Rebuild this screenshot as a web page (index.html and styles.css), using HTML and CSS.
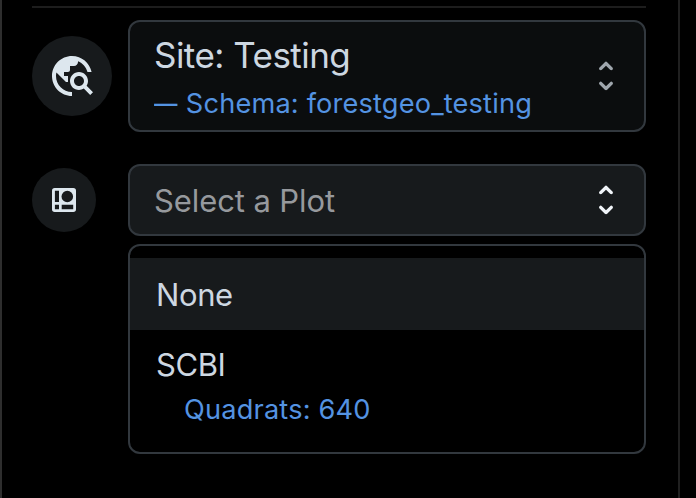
FILE: index.html
```html
<!DOCTYPE html>
<html lang="en">
<head>
<meta charset="utf-8">
<title>Site selection</title>
<link rel="stylesheet" href="styles.css">
</head>
<body>
<aside class="sidebar">
  <hr class="divider">
  <div class="row site-row">
    <span class="avatar avatar-lg">
      <svg width="48" height="48" viewBox="0 0 24 24" fill="currentColor"><path d="M19.3 16.9c.4-.7.7-1.5.7-2.4 0-2.5-2-4.5-4.5-4.5S11 12 11 14.5s2 4.5 4.5 4.5c.9 0 1.7-.3 2.4-.7l3.2 3.2 1.4-1.4-3.2-3.2zm-3.8.1c-1.4 0-2.5-1.1-2.5-2.5s1.1-2.5 2.5-2.5 2.5 1.1 2.5 2.5-1.1 2.5-2.5 2.5zM12 20v2C6.48 22 2 17.52 2 12S6.48 2 12 2c4.84 0 8.87 3.44 9.8 8h-2.07c-.64-2.46-2.4-4.47-4.73-5.41V5c0 1.1-.9 2-2 2h-2v2c0 .55-.45 1-1 1H8v2h2v3H9l-4.79-4.79C4.08 10.79 4 11.38 4 12c0 4.41 3.59 8 8 8z"/></svg>
    </span>
    <div class="select select-site">
      <div class="value">
        <div class="title">Site: Testing</div>
        <div class="detail"><span class="dash">—</span> Schema: forestgeo_testing</div>
      </div>
      <svg class="unfold" width="40" height="40" viewBox="0 0 24 24" fill="currentColor"><path d="m12 5.83 2.46 2.46c.39.39 1.02.39 1.41 0 .39-.39.39-1.02 0-1.41L12.7 3.7a.9959.9959 0 0 0-1.41 0L8.12 6.88c-.39.39-.39 1.02 0 1.41.39.39 1.02.39 1.41 0L12 5.83zm0 12.34-2.46-2.46a.9959.9959 0 0 0-1.41 0c-.39.39-.39 1.02 0 1.41l3.17 3.18c.39.39 1.02.39 1.41 0l3.17-3.17c.39-.39.39-1.02 0-1.41a.9959.9959 0 0 0-1.41 0L12 18.17z"/></svg>
    </div>
  </div>
  <div class="row plot-row">
    <span class="avatar avatar-md">
      <svg width="24" height="24" viewBox="0 0 24 24" fill="currentColor" fill-rule="evenodd"><path d="M2.7 0h18.6A2.7 2.7 0 0 1 24 2.7v18.6a2.7 2.7 0 0 1-2.7 2.7H2.7A2.7 2.7 0 0 1 0 21.3V2.7A2.7 2.7 0 0 1 2.7 0zM2.9 2.7V14H7V2.7zM2.9 16.7v4.6H7v-4.6zM9.7 16.7v4.6h11.5v-4.6zM15.3 2.7a5.8 5.8 0 1 0 0 11.6a5.8 5.8 0 1 0 0-11.6z"/></svg>
    </span>
    <div class="select select-plot">
      <div class="placeholder">Select a Plot</div>
      <svg class="unfold" width="40" height="40" viewBox="0 0 24 24" fill="currentColor"><path d="m12 5.83 2.46 2.46c.39.39 1.02.39 1.41 0 .39-.39.39-1.02 0-1.41L12.7 3.7a.9959.9959 0 0 0-1.41 0L8.12 6.88c-.39.39-.39 1.02 0 1.41.39.39 1.02.39 1.41 0L12 5.83zm0 12.34-2.46-2.46a.9959.9959 0 0 0-1.41 0c-.39.39-.39 1.02 0 1.41l3.17 3.18c.39.39 1.02.39 1.41 0l3.17-3.17c.39-.39.39-1.02 0-1.41a.9959.9959 0 0 0-1.41 0L12 18.17z"/></svg>
    </div>
  </div>
  <div class="listbox">
    <div class="option active">None</div>
    <div class="option plot"><span class="plot-name">SCBI</span><div class="quadrats">Quadrats: 640</div></div>
  </div>
</aside>
</body>
</html>
```
FILE: styles.css
```css
* { box-sizing: border-box; }
body {
  margin: 0;
  background: #000;
  color: #cdd7e1;
  font-family: Inter, sans-serif;
  font-size: 31px;
  overflow: hidden;
}
svg { display: block; flex: none; }
.sidebar {
  width: 680px;
  height: 498px;
  padding: 6px 32px 0 30px;
  border-left: 2px solid #2e2e2e;
  border-right: 2px solid #202020;
}
.divider {
  height: 2px;
  margin: 0 0 12px;
  border: 0;
  background: #1d1d1d;
}
.row { display: flex; align-items: center; }
.avatar {
  display: flex;
  flex: none;
  align-items: center;
  justify-content: center;
  border-radius: 50%;
  background: #171a1c;
  color: #dde7ee;
}
.avatar-lg { width: 80px; height: 80px; margin-right: 16px; }
.avatar-md { width: 64px; height: 64px; margin-right: 32px; }
.select {
  display: flex;
  flex: 1;
  align-items: center;
  justify-content: space-between;
  padding: 0 18px 0 24px;
  border: 2px solid #32383e;
  border-radius: 12px;
  white-space: nowrap;
}
.select-site { height: 112px; background: #0b0d0e; }
.select-site .unfold { color: #9fa6ad; }
.select-plot { height: 72px; background: #171a1c; }
.select-plot .unfold { color: #f0f4f8; }
.plot-row { margin-top: 32px; }
.title {
  font-size: 35px;
  line-height: 56px;
  letter-spacing: -0.53px;
}
.detail {
  font-size: 27.2px;
  line-height: 42px;
  letter-spacing: 0.17px;
  color: #5493e2;
}
.dash {
  display: inline-block;
  width: 24px;
  transform: scaleX(0.86);
  transform-origin: 0 50%;
}
.placeholder {
  padding-top: 1px;
  letter-spacing: -0.1px;
  color: #96999d;
}
.listbox {
  height: 210px;
  margin: 8px 0 0 96px;
  padding-top: 12px;
  border: 2px solid #32383e;
  border-radius: 12px;
}
.option {
  padding: 0 26px;
  line-height: 48px;
  letter-spacing: -0.4px;
}
.active { height: 72px; padding-top: 13px; background: #171a1c; }
.plot { padding-top: 11px; }
.plot-name { display: block; }
.quadrats {
  padding-left: 28px;
  font-size: 27.2px;
  line-height: 42px;
  letter-spacing: 0.18px;
  color: #5493e2;
}
```
